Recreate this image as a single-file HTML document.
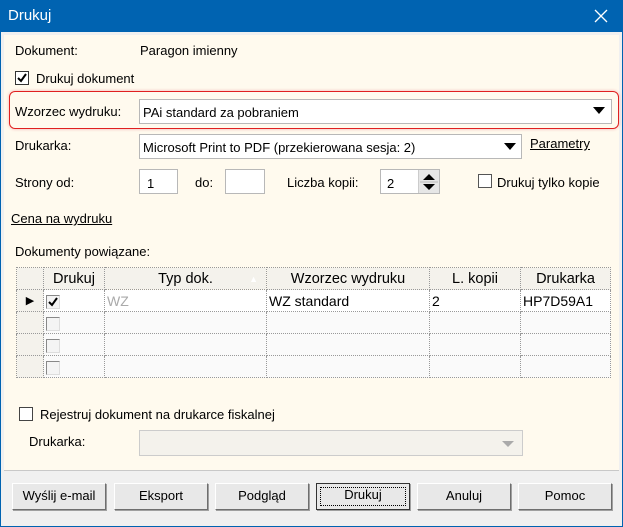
<!DOCTYPE html>
<html><head><meta charset="utf-8"><style>
*{box-sizing:border-box;margin:0;padding:0}
body{width:623px;height:527px;overflow:hidden;font-family:"Liberation Sans",Tahoma,sans-serif;font-size:13px;color:#000;background:#0063b1;position:relative}
.a{position:absolute;white-space:nowrap}
#win{position:absolute;left:1px;top:32px;width:621px;height:494px;background:#f0f0f0}
#cream{position:absolute;left:3px;top:3px;width:615px;height:436px;background:#fffaee;border-bottom:1px solid #c8c8c8}
.inp{position:absolute;background:#fff;border:1px solid #b8b8b8}
.cb{position:absolute;width:14px;height:14px;border:1px solid #333;background:#fff}
.btn{position:absolute;top:483px;height:27px;width:94px;background:#e8e8e8;border:1px solid;border-color:#fff #6e6e6e #6e6e6e #fff;box-shadow:1px 1px 0 #a0a0a0;text-align:center;line-height:24px}
.arrow{position:absolute;width:0;height:0;border-left:6px solid transparent;border-right:6px solid transparent;border-top:7px solid #000}
table{position:absolute;left:16px;top:267px;border-collapse:collapse;font-size:14px}
td{border:1px dotted #999;height:22px;padding:0 2px}
th{border:1px dotted #999;height:22px;font-weight:normal;background:#f4f2ec;font-size:14.5px}
tr.e td{background:#fafafa}
.sc{display:inline-block;width:14px;height:14px;border:1px solid #888;border-right-color:#ddd;border-bottom-color:#ddd;background:#f4f4f4;vertical-align:middle}
u{text-decoration:underline}
</style></head><body>
<div class="a" style="left:8px;top:7px;color:#fff;font-size:15px">Drukuj</div>
<svg class="a" style="left:594px;top:9px" width="14" height="14"><path d="M1 1L13 13M13 1L1 13" stroke="#fff" stroke-width="1.3"/></svg>
<div id="win"><div id="cream"></div></div>

<div class="a" style="left:15px;top:43px">Dokument:</div>
<div class="a" style="left:140px;top:43px">Paragon imienny</div>
<div class="cb" style="left:15px;top:71px"></div>
<svg class="a" style="left:16px;top:72px" width="12" height="12"><path d="M2 6L5 9L10 2" stroke="#000" stroke-width="2" fill="none"/></svg>
<div class="a" style="left:36px;top:71px">Drukuj dokument</div>

<div class="a" style="left:9px;top:91px;width:610px;height:38px;border:1.5px solid #e02020;border-radius:6px;box-shadow:0 0 3px #f0b0b0"></div>
<div class="a" style="left:15px;top:104px">Wzorzec wydruku:</div>
<div class="inp" style="left:139px;top:99px;width:473px;height:25px"></div>
<div class="a" style="left:143px;top:105px">PAi standard za pobraniem</div>
<div class="arrow" style="left:593px;top:107px"></div>

<div class="a" style="left:15px;top:138px">Drukarka:</div>
<div class="inp" style="left:139px;top:134px;width:383px;height:25px"></div>
<div class="a" style="left:143px;top:140px">Microsoft Print to PDF (przekierowana sesja: 2)</div>
<div class="arrow" style="left:504px;top:143px"></div>
<div class="a" style="left:530px;top:136px"><u>Parametry</u></div>

<div class="a" style="left:15px;top:175px">Strony od:</div>
<div class="inp" style="left:139px;top:169px;width:39px;height:25px"></div>
<div class="a" style="left:147px;top:176px">1</div>
<div class="a" style="left:195px;top:175px">do:</div>
<div class="inp" style="left:225px;top:169px;width:40px;height:25px"></div>
<div class="a" style="left:287px;top:175px">Liczba kopii:</div>
<div class="inp" style="left:380px;top:169px;width:60px;height:25px"></div>
<div class="a" style="left:387px;top:176px">2</div>
<div class="a" style="left:418px;top:170px;width:21px;height:23px;background:#e6e6e6;border-left:1px solid #ccc"></div>
<svg class="a" style="left:419px;top:171px" width="20" height="22"><path d="M4 9L10 3L16 9Z M4 13L16 13L10 19Z" fill="#000"/><path d="M1 11H19" stroke="#bbb"/></svg>
<div class="cb" style="left:478px;top:174px;border-color:#555"></div>
<div class="a" style="left:497px;top:175px">Drukuj tylko kopie</div>

<div class="a" style="left:11px;top:211px"><u>Cena na wydruku</u></div>
<div class="a" style="left:15px;top:244px">Dokumenty powiązane:</div>

<table>
<tr><th style="width:27px"></th><th style="width:61px">Drukuj</th><th style="width:162px;position:relative">Typ dok.<span style="position:absolute;right:8px;top:6px;color:#fff;font-size:9px">▲</span></th><th style="width:163px">Wzorzec wydruku</th><th style="width:91px">L. kopii</th><th style="width:90px">Drukarka</th></tr>
<tr style="background:#fff"><td style="text-align:center;font-size:11px;background:#f4f2ec">▶</td><td><span class="sc" style="position:relative"><svg style="position:absolute;left:0;top:0" width="12" height="12"><path d="M2 6L5 9L10 2" stroke="#000" stroke-width="2" fill="none"/></svg></span></td><td style="color:#aaa">WZ</td><td>WZ standard</td><td>2</td><td>HP7D59A1</td></tr>
<tr class="e"><td style="background:#f4f2ec"></td><td><span class="sc"></span></td><td></td><td></td><td></td><td></td></tr>
<tr class="e"><td style="background:#f4f2ec"></td><td><span class="sc"></span></td><td></td><td></td><td></td><td></td></tr>
<tr class="e"><td style="background:#f4f2ec"></td><td><span class="sc"></span></td><td></td><td></td><td></td><td></td></tr>
</table>

<div class="cb" style="left:19px;top:407px;border-color:#444"></div>
<div class="a" style="left:40px;top:407px">Rejestruj dokument na drukarce fiskalnej</div>
<div class="a" style="left:29px;top:434px">Drukarka:</div>
<div class="inp" style="left:139px;top:430px;width:384px;height:26px;background:#f4f2ec;border-color:#ccc"></div>
<div class="arrow" style="left:502px;top:441px;border-top-color:#aaa;border-left-width:6px;border-right-width:6px;border-top-width:6px"></div>

<div class="btn" style="left:12px">Wyślij e-mail</div>
<div class="btn" style="left:114px">Eksport</div>
<div class="btn" style="left:215px">Podgląd</div>
<div class="btn" style="left:316px;border:1px solid #333"><div style="position:absolute;left:3px;top:3px;right:3px;bottom:3px;border:1px dotted #000"></div><span style="position:relative;top:-1px">Drukuj</span></div>
<div class="btn" style="left:417px">Anuluj</div>
<div class="btn" style="left:518px">Pomoc</div>
</body></html>
